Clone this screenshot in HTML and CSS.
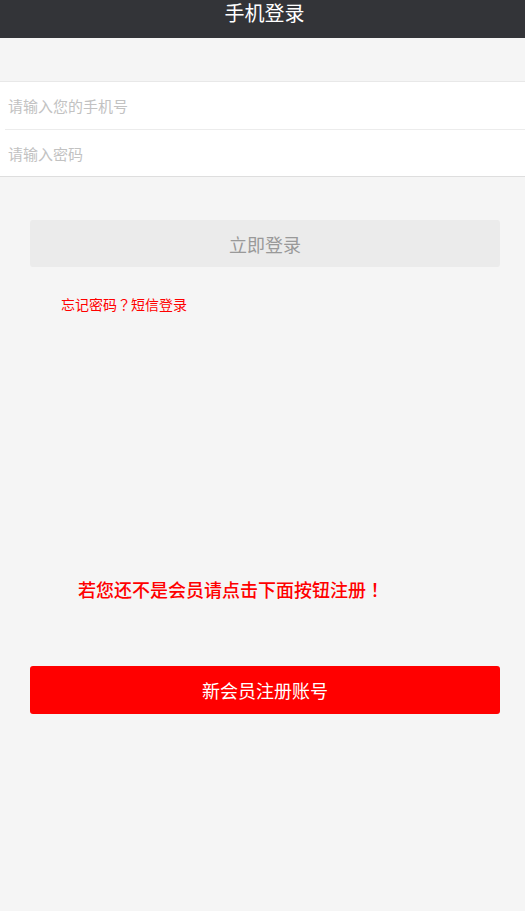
FILE: index.html
```html
<!DOCTYPE html>
<html lang="zh-CN">
<head>
<meta charset="utf-8">
<title>手机登录</title>
<link rel="stylesheet" href="styles.css">
</head>
<body>
<header class="topbar"><h1 class="title">手机登录</h1></header>
<main class="page">
  <div class="fields">
    <div class="field"><input class="input" type="tel" placeholder="请输入您的手机号"></div>
    <div class="field"><input class="input" type="password" placeholder="请输入密码"></div>
  </div>
  <div class="actions">
    <button class="btn btn-login" type="button">立即登录</button>
  </div>
  <div class="links"><a class="link" href="#">忘记密码<span class="punct" lang="zh-TW">？</span>短信登录</a></div>
  <p class="notice">若您还不是会员请点击下面按钮注册<span class="punct" lang="zh-TW">！</span></p>
  <div class="actions">
    <button class="btn btn-register" type="button">新会员注册账号</button>
  </div>
</main>
</body>
</html>
```
FILE: styles.css
```css
* { box-sizing: border-box; }
html, body { margin: 0; padding: 0; }
body {
  background: #f5f5f5;
  font-family: "Noto Sans CJK SC", "Liberation Sans", sans-serif;
  min-height: 911px;
}
.topbar {
  height: 38px;
  background: #333438;
  display: flex;
  justify-content: center;
  padding-left: 4px;
}
.title {
  margin: 0;
  padding-top: 1px;
  color: #fff;
  font-size: 20px;
  font-weight: normal;
  line-height: 24px;
}
.page { display: flex; flex-direction: column; }
.fields {
  margin-top: 43px;
  background: #fff;
  border-top: 1px solid #e8e8e8;
  border-bottom: 1px solid #dedede;
}
.field {
  height: 47px;
  display: flex;
  align-items: center;
}
.field + .field { border-top: 1px solid #ececec; margin-left: 5px; }
.field + .field .input { padding-left: 3px; }
.input {
  border: 0;
  outline: 0;
  background: transparent;
  width: 100%;
  padding: 0 0 0 8px;
  font-family: inherit;
  font-size: 15px;
  color: #333;
}
.input::placeholder { color: #c2c2c2; }
.actions { padding: 0 25px 0 30px; }
.btn {
  width: 100%;
  height: 47px;
  border: 0;
  border-radius: 3px;
  font-family: inherit;
  font-size: 18px;
  padding: 0;
}
.fields + .actions { margin-top: 43px; }
.btn-login { background: #ebebeb; color: #999; }
.links { padding: 24px 0 0 61px; }
.link {
  color: #f00;
  font-size: 14px;
  text-decoration: none;
  line-height: 24px;
}
.punct { font-family: "Noto Sans CJK TC", "Noto Sans CJK SC", sans-serif; }
.notice {
  margin: 260px 0 0;
  padding-left: 78px;
  color: #f00;
  font-size: 18px;
  font-weight: 500;
  line-height: 26px;
}
.notice + .actions { margin-top: 64px; }
.btn-register { background: #f00; color: #fff; height: 48px; }
```
